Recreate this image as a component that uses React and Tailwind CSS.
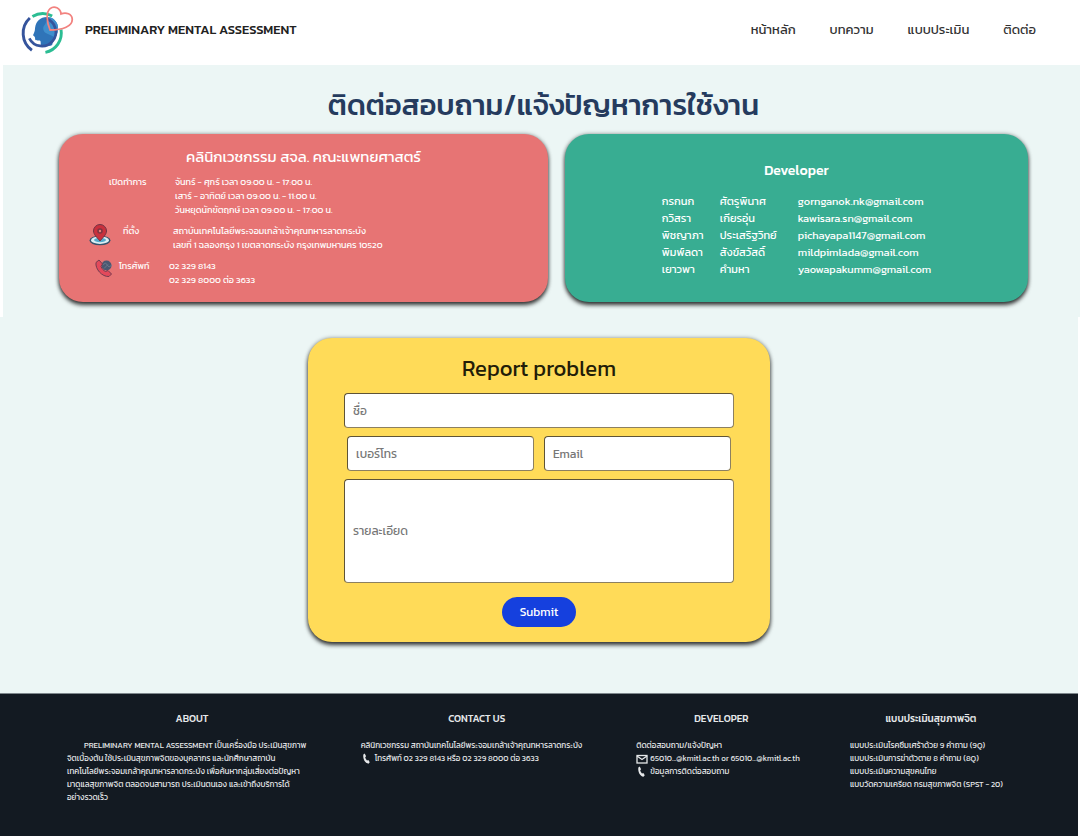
import React from "react";

const navLinks = ["หน้าหลัก", "บทความ", "แบบประเมิน", "ติดต่อ"];

const developers = [
  ["กรกนก", "ศัตรูพินาศ", "gornganok.nk@gmail.com"],
  ["กวิสรา", "เกียรอุ่น", "kawisara.sn@gmail.com"],
  ["พิชญาภา", "ประเสริฐวิทย์", "pichayapa1147@gmail.com"],
  ["พิมพ์ลดา", "สังข์สวัสดิ์", "mildpimlada@gmail.com"],
  ["เยาวพา", "คำมหา", "yaowapakumm@gmail.com"],
];

const assessments = [
  "แบบประเมินโรคซึมเศร้าด้วย 9 คำถาม (9Q)",
  "แบบประเมินการฆ่าตัวตาย 8 คำถาม (8Q)",
  "แบบประเมินความสุขคนไทย",
  "แบบวัดความเครียด กรมสุขภาพจิต (SPST - 20)",
];

function Logo() {
  return (
    <svg viewBox="1 5 51 46" className="h-12 w-[53px]" fill="none" aria-hidden="true">
      <path d="M26 15.500c5 0 8.500 3 10 7 1.500 5 0 10-2.500 13-2 3-2 5-2.500 7-4 2-8 1.500-10.500.5-1-2 0-4.500-1.500-5-2 0-4 .5-4.500-1 .5-2-.5-3-2-4 1-2 2-4 2-7 1-6.500 5-10.500 11.500-10.500Z" fill="#2f74b8" />
      <path d="M26 15.500c5 0 8.500 3 10 7 1.500 5 0 10-2.500 13-4-4-10-3-11-8-1-4 4-5 3.500-12Z" fill="#3f8fcd" />
      <path d="M25 17A13.500 13.500 0 1 1 9 36" stroke="#35549c" strokeWidth="2.600" />
      <path d="M11.500 47.500A20 20 0 0 1 9.500 16.500" stroke="#35549c" strokeWidth="2.800" />
      <path d="M12 15A19.500 19.500 0 0 1 31 14.500" stroke="#2bbd93" strokeWidth="2.800" />
      <path d="M39.500 27.500A19 19 0 0 1 24.500 49.500" stroke="#2bbd93" strokeWidth="2.800" />
      <path d="M29 28c-3.500-8-4-17 0-20.500 4-3.500 10-.5 10.500 5 5-2 10.500 0 10.800 5 .3 7-9 10.500-21.300 10.500Z" stroke="#f2827f" strokeWidth="1.700" />
    </svg>
  );
}

function PinIcon() {
  return (
    <svg viewBox="0 0 22 22" className="size-[22px]" aria-hidden="true">
      <ellipse cx="11" cy="16.500" rx="10.500" ry="4.800" fill="#35536d" />
      <ellipse cx="11" cy="16.200" rx="9" ry="3.700" fill="#dceef3" />
      <ellipse cx="11" cy="16" rx="6" ry="2.200" fill="#55a9cb" />
      <path d="M11 17C8 13.500 4.500 10.500 4.500 7a6.500 6.500 0 0 1 13 0c0 3.500-3.500 6.500-6.500 10Z" fill="#c9303d" stroke="#6f3445" strokeWidth="1" />
      <circle cx="11" cy="7" r="2.800" fill="#7c3443" />
      <circle cx="11" cy="7" r="1.200" fill="#ef7b76" />
    </svg>
  );
}

function HandsetIcon() {
  return (
    <svg viewBox="0 0 18 18" className="size-[18px]" aria-hidden="true">
      <circle cx="11.500" cy="6.500" r="5" fill="#4c5870" />
      <path d="m7.500 6 3-2 3.500 4 3-2M9 9.500l4-4" stroke="#717d90" strokeWidth=".8" fill="none" />
      <path d="M1 3.500 4 1l3.500 4-1.500 2.500c1 2.500 2.500 4 4.500 5l2.500-1 3.500 3.500-2.500 2.500C7 18 0 10 1 3.500Z" fill="#e3495b" stroke="#743c50" strokeWidth="1" />
    </svg>
  );
}

function PhoneGlyph() {
  return (
    <svg viewBox="0 0 12 12" className="h-[11px] w-3 shrink-0" fill="currentColor" aria-hidden="true">
      <path d="M3.500.5 5 3.500l-1 1c.3 1.500 1 2.600 2 3.600l1.500-.4L9 10.200 7.600 11.700C4 11 1.300 6.500 2 1.500Z" />
    </svg>
  );
}

function MailGlyph() {
  return (
    <svg viewBox="0 0 12 10" className="h-[10px] w-3 shrink-0" fill="none" stroke="currentColor" strokeWidth="1.300" aria-hidden="true">
      <rect x="1" y="1.500" width="10" height="7.500" />
      <path d="m1 2 5 3.500L11 2" />
    </svg>
  );
}

const cardClass =
  "rounded-[24px] shadow-[0_3px_4px_rgba(0,0,0,0.75),0_0_4px_rgba(0,0,0,0.35)]";
const fieldClass =
  "block rounded border border-t-[#5f5436] border-l-[#5f5436] border-r-[#8c8060] border-b-[#8c8060] bg-white px-2 text-[12px] text-gray-800 placeholder:text-[#777777]";

function FooterColumn({ title, children }) {
  return (
    <section>
      <h2 className="text-center text-[10px] leading-4 font-medium">{title}</h2>
      <div className="mt-3 text-[8px] leading-[13px] whitespace-nowrap">{children}</div>
    </section>
  );
}

export default function App() {
  return (
    <div className="flex min-h-screen flex-col bg-white font-['Kanit','Prompt','Noto_Sans','Noto_Sans_Thai',sans-serif]">
      <header className="flex h-[65px] items-center justify-between pr-11 pb-1.5 pl-[21px]">
        <a href="#home" className="flex items-center gap-[11px] text-[13px] font-medium text-[#222222]">
          <Logo />
          PRELIMINARY MENTAL ASSESSMENT
        </a>
        <nav className="flex gap-[34px] text-[13px] text-[#333333]">
          {navLinks.map((label) => (
            <a key={label} href={`#${label}`}>{label}</a>
          ))}
        </nav>
      </header>

      <main className="flex flex-1 flex-col bg-[#ecf6f5]">
        <div className="border-l-[3px] border-white pr-[52px] pb-[15px] pl-14">
          <h1 className="pt-4 text-center text-[29px] leading-[48px] font-medium text-[#253b5e]">
            ติดต่อสอบถาม/แจ้งปัญหาการใช้งาน
          </h1>
          <div className="mt-[5px] grid grid-cols-[489fr_463fr] gap-[17px]">
            <section className={`${cardClass} bg-[#e77474] px-[30px] pt-[11px] pb-[15px] text-white`}>
              <h2 className="text-center text-[15px] leading-6">คลินิกเวชกรรม สจล. คณะแพทยศาสตร์</h2>
              <dl className="mt-1.5 grid grid-cols-[80px_1fr] gap-y-[7px] text-[9px] leading-[14px] whitespace-nowrap">
                <dt className="pl-5">เปิดทำการ</dt>
                <dd className="pl-1.5">
                  จันทร์ - ศุกร์ เวลา 09:00 น. - 17:00 น.
                  <br />
                  เสาร์ - อาทิตย์ เวลา 09:00 น. - 11:00 น.
                  <br />
                  วันหยุดนักขัตฤกษ์ เวลา 09:00 น. - 17:00 น.
                </dd>
                <dt className="flex items-start gap-3">
                  <PinIcon />
                  ที่ตั้ง
                </dt>
                <dd className="pl-1">
                  สถาบันเทคโนโลยีพระจอมเกล้าเจ้าคุณทหารลาดกระบัง
                  <br />
                  เลขที่ 1 ฉลองกรุง 1 เขตลาดกระบัง กรุงเทพมหานคร 10520
                </dd>
                <dt className="flex items-start gap-1.5 pl-1.5">
                  <HandsetIcon />
                  โทรศัพท์
                </dt>
                <dd>
                  02 329 8143
                  <br />
                  02 329 8000 ต่อ 3633
                </dd>
              </dl>
            </section>

            <section className={`${cardClass} flex flex-col items-center bg-[#38ad92] pt-[25px] pb-6 text-white`}>
              <h2 className="text-[14px] leading-6 font-medium">Developer</h2>
              <table className="mt-2.5 text-[11px] leading-[17px] whitespace-nowrap">
                <tbody>
                  {developers.map(([first, last, email]) => (
                    <tr key={email}>
                      <td className="w-[58px] p-0">{first}</td>
                      <td className="w-[78px] p-0">{last}</td>
                      <td className="p-0">{email}</td>
                    </tr>
                  ))}
                </tbody>
              </table>
            </section>
          </div>
        </div>

        <div className="flex-1 border-r-2 border-white pt-[21px] pb-[50px]">
          <form
            onSubmit={(event) => event.preventDefault()}
            className={`${cardClass} mx-auto w-[462px] max-w-full bg-[#ffdb58] px-9 pt-[15px] pb-[15px]`}
          >
            <h2 className="text-center text-[22px] leading-8 text-[#231d08]">Report problem</h2>
            <div className="mt-2 flex flex-col gap-2">
              <input aria-label="ชื่อ" placeholder="ชื่อ" className={`${fieldClass} h-[35px] w-full`} />
              <div className="flex gap-2.5 px-[3px]">
                <input type="tel" aria-label="เบอร์โทร" placeholder="เบอร์โทร" className={`${fieldClass} h-[35px] min-w-0 flex-1`} />
                <input type="email" aria-label="Email" placeholder="Email" className={`${fieldClass} h-[35px] min-w-0 flex-1`} />
              </div>
              <input aria-label="รายละเอียด" placeholder="รายละเอียด" className={`${fieldClass} h-[104px] w-full`} />
            </div>
            <button type="submit" className="mx-auto mt-3.5 block h-[30px] rounded-full bg-[#1540de] px-[18px] text-[12px] text-white">
              Submit
            </button>
          </form>
        </div>
      </main>

      <footer className="mr-0.5 grid min-h-[143px] grid-cols-[250px_232px_170px_162px] justify-between border-t border-[#7e878c] bg-[#131a22] pt-[17px] pr-[66px] pl-[67px] text-[#e6e8ea]">
        <FooterColumn title="ABOUT">
          <p className="indent-[17px]">
            PRELIMINARY MENTAL ASSESSMENT เป็นเครื่องมือ ประเมินสุขภาพ
            <br />
            จิตเบื้องต้น ใช้ประเมินสุขภาพจิตของบุคลากร และนักศึกษาสถาบัน
            <br />
            เทคโนโลยีพระจอมเกล้าคุณทหารลาดกระบัง เพื่อค้นหากลุ่มเสี่ยงต่อปัญหา
            <br />
            มาดูแลสุขภาพจิต ตลอดจนสามารถ ประเมินตนเอง และเข้าถึงบริการได้
            <br />
            อย่างรวดเร็ว
          </p>
        </FooterColumn>
        <FooterColumn title="CONTACT US">
          <p>คลินิกเวชกรรม สถาบันเทคโนโลยีพระจอมเกล้าเจ้าคุณทหารลาดกระบัง</p>
          <p className="flex items-center gap-0.5">
            <PhoneGlyph />
            โทรศัพท์ 02 329 8143 หรือ 02 329 8000 ต่อ 3633
          </p>
        </FooterColumn>
        <FooterColumn title="DEVELOPER">
          <p>ติดต่อสอบถาม/แจ้งปัญหา</p>
          <p className="flex items-center gap-0.5">
            <MailGlyph />
            65010...@kmitl.ac.th or 65010...@kmitl.ac.th
          </p>
          <p className="flex items-center gap-0.5">
            <PhoneGlyph />
            ข้อมูลการติดต่อสอบถาม
          </p>
        </FooterColumn>
        <FooterColumn title="แบบประเมินสุขภาพจิต">
          <ul>
            {assessments.map((item) => (
              <li key={item}>{item}</li>
            ))}
          </ul>
        </FooterColumn>
      </footer>
    </div>
  );
}
